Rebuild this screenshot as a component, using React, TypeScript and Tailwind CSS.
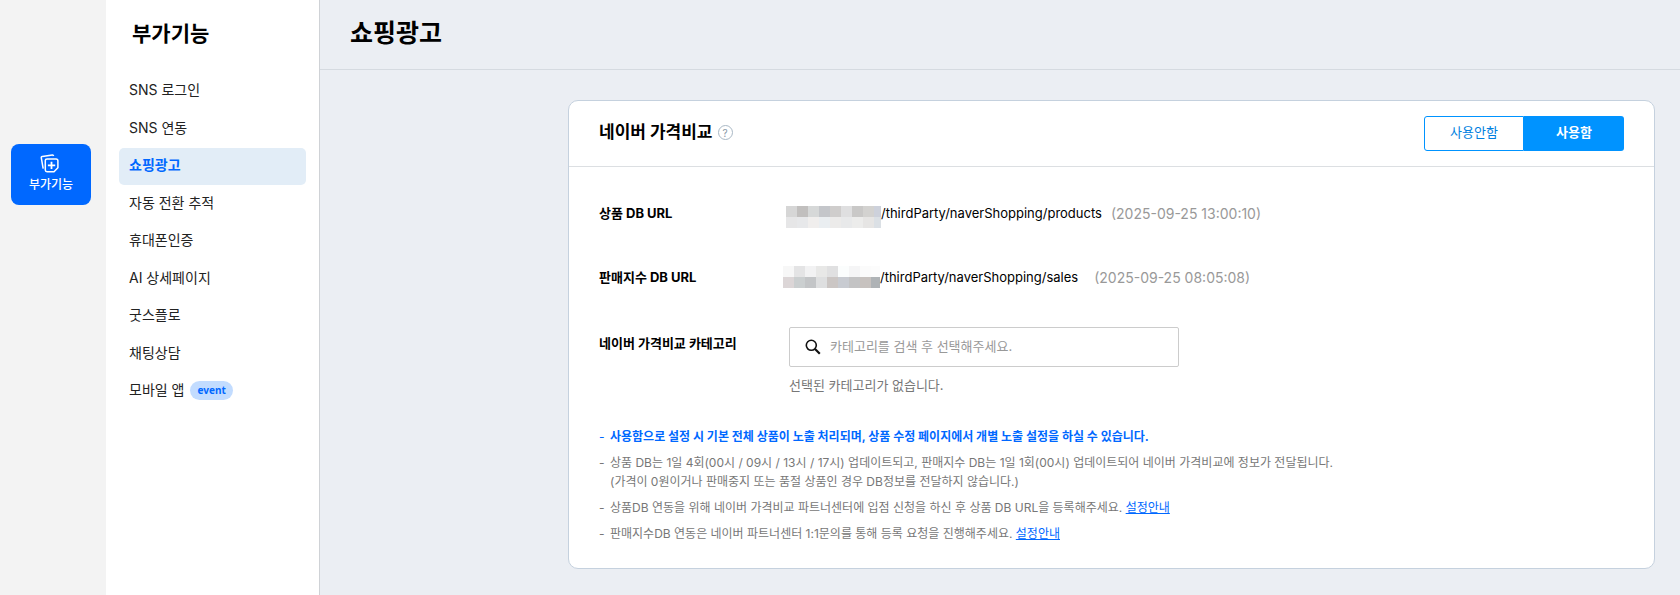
import React from "react";

type MenuItem = {
  label: string;
  active?: boolean;
  badge?: string;
};

const menuItems: MenuItem[] = [
  { label: "SNS 로그인" },
  { label: "SNS 연동" },
  { label: "쇼핑광고", active: true },
  { label: "자동 전환 추적" },
  { label: "휴대폰인증" },
  { label: "AI 상세페이지" },
  { label: "굿스플로" },
  { label: "채팅상담" },
  { label: "모바일 앱", badge: "event" },
];

const productMask = [
  ["#d6d6d6", "#c1bfbe", "#d6d8d8", "#c4c6ca", "#cfcdcc", "#dfdfe0", "#c9c8c7", "#d3d2d0", "#cdd1db"],
  ["#e6e6e7", "#e7e8ea", "#f0eeed", "#eaeef1", "#ecebea", "#e8e9ea", "#ececeb", "#e6e5e4", "#dbe0e5"],
];

const salesMask = [
  ["#f7f7f7", "#e4e4e5", "#f2f2f3", "#e8e8e7", "#e0e0e1", "#fbfdfd", "#f5f5f6", "#fbfbfb", "#fcfcfc"],
  ["#dcd6d7", "#cbcfd0", "#c3c5c7", "#dedfe0", "#cbc6c4", "#c8cbd1", "#c3c3c4", "#c7c2bf", "#afb3b6"],
];

const MaskedHost = ({ rows, className }: { rows: string[][]; className: string }) => (
  <span className={`${className} block shrink-0 overflow-hidden`} aria-hidden="true">
    {rows.map((row, i) => (
      <span key={i} className="flex h-[11px]">
        {row.map((color, j) => (
          <span key={j} className="h-[11px] w-[11px] shrink-0" style={{ backgroundColor: color }} />
        ))}
      </span>
    ))}
  </span>
);

const AddonIcon = () => (
  <svg className="mr-1" width="19" height="19" viewBox="0 0 19 19" fill="none" stroke="#fff" strokeWidth="1.5" aria-hidden="true">
    <path d="M3.2 14.6 L1.3 3.9 Q1 2.7 2.3 2.4 L12.4 1 Q13.4 .9 13.6 2" />
    <path d="M7 4.9 H16 Q17.9 4.9 17.9 6.7 V13.8 L14 17.8 H7 Q5.3 17.8 5.3 16.1 V6.6 Q5.3 4.9 7 4.9 Z" />
    <path d="M11.5 7.7 V15 M7.9 11.3 H15.2" strokeWidth="1.8" />
  </svg>
);

const SearchIcon = () => (
  <svg width="16" height="16" viewBox="0 0 16 16" fill="none" stroke="#111" aria-hidden="true">
    <circle cx="6.3" cy="6.3" r="5" strokeWidth="1.6" />
    <path d="M10 10 L14.8 14.8" strokeWidth="2.2" />
  </svg>
);

const Sidebar = () => (
  <aside className="w-[214px] shrink-0 border-r border-[#cfd2d6] bg-white">
    <h2 className="pt-[18px] pl-[26px] text-[21px] leading-8 font-bold">부가기능</h2>
    <ul className="mx-[13px] mt-[23px] grid h-[337px] content-between">
      {menuItems.map((item) => (
        <li key={item.label}>
          <a
            href="#"
            aria-current={item.active ? "page" : undefined}
            className={
              item.active
                ? "flex h-[37px] items-center rounded-[5px] bg-[#e2edf7] px-[10px] pb-[3px] text-sm font-bold text-[#0068ff]"
                : "flex h-[37px] items-center rounded-[5px] px-[10px] pb-[3px] text-sm text-[#222]"
            }
          >
            {item.label}
            {item.badge && (
              <span className="ml-[6px] rounded-full bg-[#c2dcff] px-[7px] font-['Noto_Sans'] text-[10px] leading-[19px] font-bold text-[#0068ff]">
                {item.badge}
              </span>
            )}
          </a>
        </li>
      ))}
    </ul>
  </aside>
);

const Note = ({ children, highlight }: { children: React.ReactNode; highlight?: boolean }) => (
  <li className={highlight ? "flex font-bold text-[#0068ff]" : "flex text-[#777]"}>
    <span className="w-[11px] shrink-0 font-normal">-</span>
    <span>{children}</span>
  </li>
);

const GuideLink = () => (
  <a href="#" className="text-[#0068ff] underline">
    설정안내
  </a>
);

const PriceCompareCard = () => (
  <section className="mr-[25px] ml-[248px] rounded-[10px] border border-[#c5d1de] bg-white">
    <div className="flex h-[66px] items-center border-b border-[#dcdfe2] px-[30px]">
      <div className="flex items-center pb-[2px]">
        <h2 className="text-[17px] font-bold">네이버 가격비교</h2>
        <button
          type="button"
          aria-label="도움말"
          className="ml-[5px] flex h-[15px] w-[15px] items-center justify-center rounded-full border border-[#a9b8c5] text-[10px] leading-none text-[#8797a6]"
        >
          ?
        </button>
      </div>
      <div className="ml-auto flex text-[13px]">
        <button type="button" className="h-[35px] w-[100px] rounded-l-[3px] border border-[#0093ff] pb-[2px] text-[#007fe0]">
          사용안함
        </button>
        <button type="button" className="h-[35px] w-[100px] rounded-r-[3px] bg-[#0093ff] pb-[2px] font-bold text-white">
          사용함
        </button>
      </div>
    </div>

    <div className="px-[30px] pt-[33px] pb-[25px]">
      <dl className="text-[13px]">
        <div className="flex h-[28px] items-center">
          <dt className="w-[187px] font-bold">상품 DB URL</dt>
          <dd className="flex h-full items-center">
            <MaskedHost rows={productMask} className="w-[95px] self-end" />
            <span>/thirdParty/naverShopping/products</span>
            <span className="ml-[9px] text-sm text-[#999]">(2025-09-25 13:00:10)</span>
          </dd>
        </div>
        <div className="mt-[38px] flex h-[24px] items-center">
          <dt className="w-[184px] font-bold">판매지수 DB URL</dt>
          <dd className="flex h-full items-center">
            <MaskedHost rows={salesMask} className="w-[97px] self-start" />
            <span>/thirdParty/naverShopping/sales</span>
            <span className="ml-[16px] text-sm text-[#999]">(2025-09-25 08:05:08)</span>
          </dd>
        </div>
      </dl>

      <div className="mt-[37px] flex text-[13px]">
        <label htmlFor="category" className="w-[190px] pt-[5px] leading-[22px] font-bold">
          네이버 가격비교 카테고리
        </label>
        <div className="w-[390px]">
          <div className="flex h-[40px] items-center rounded-[2px] border border-[#ccc] pl-[15px]">
            <SearchIcon />
            <input
              id="category"
              type="text"
              placeholder="카테고리를 검색 후 선택해주세요."
              className="ml-[9px] min-w-0 flex-1 outline-none placeholder:text-[#999]"
            />
          </div>
          <p className="mt-[7px] leading-[22px] text-[#777]">선택된 카테고리가 없습니다.</p>
        </div>
      </div>

      <ul className="mt-[31px] space-y-[7px] text-xs leading-[19px]">
        <Note highlight>사용함으로 설정 시 기본 전체 상품이 노출 처리되며, 상품 수정 페이지에서 개별 노출 설정을 하실 수 있습니다.</Note>
        <Note>
          상품 DB는 1일 4회(00시 / 09시 / 13시 / 17시) 업데이트되고, 판매지수 DB는 1일 1회(00시) 업데이트되어 네이버 가격비교에 정보가 전달됩니다.
          <br />
          (가격이 0원이거나 판매중지 또는 품절 상품인 경우 DB정보를 전달하지 않습니다.)
        </Note>
        <Note>
          상품DB 연동을 위해 네이버 가격비교 파트너센터에 입점 신청을 하신 후 상품 DB URL을 등록해주세요. <GuideLink />
        </Note>
        <Note>
          판매지수DB 연동은 네이버 파트너센터 1:1문의를 통해 등록 요청을 진행해주세요. <GuideLink />
        </Note>
      </ul>
    </div>
  </section>
);

const App = () => {
  return (
    <div className="flex min-h-screen bg-[#ebeef3] font-[Inter,'Noto_Sans_CJK_KR',sans-serif] text-black">
      <nav className="w-[106px] shrink-0 bg-[#f3f3f3] pt-[144px]">
        <a
          href="#"
          className="ml-[11px] flex h-[61px] w-[80px] flex-col items-center rounded-lg bg-[#0068ff] pt-[10px] text-xs leading-[24px] font-medium text-white"
        >
          <AddonIcon />
          부가기능
        </a>
      </nav>
      <Sidebar />
      <main className="min-w-0 flex-1 pb-[26px]">
        <header className="mb-[30px] h-[70px] border-b border-[#d5dae0] pt-[15px] pl-[30px]">
          <h1 className="text-[25px] leading-9 font-bold">쇼핑광고</h1>
        </header>
        <PriceCompareCard />
      </main>
    </div>
  );
};

export default App;
